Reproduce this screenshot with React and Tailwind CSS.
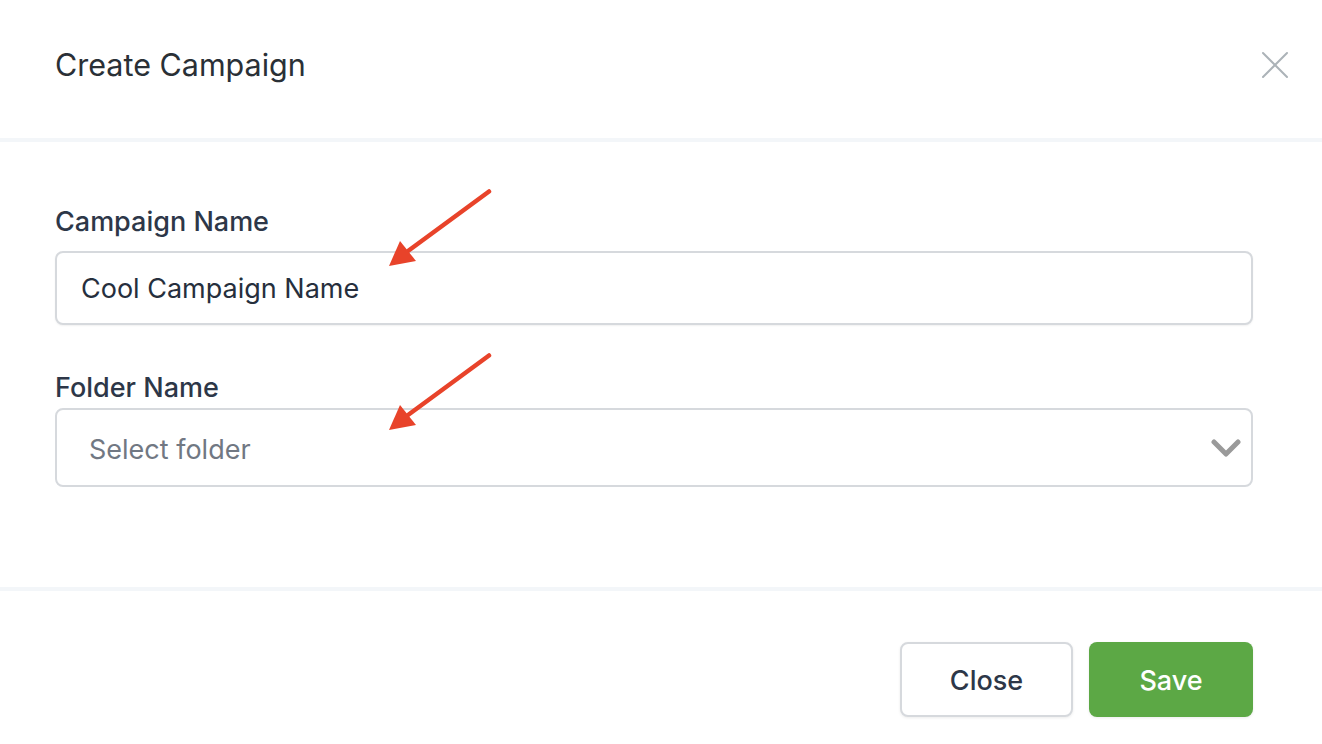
import React from "react";

function Arrow({ className }) {
  return (
    <svg
      className={className}
      width="104"
      height="80"
      viewBox="0 0 104 80"
      fill="none"
    >
      <line x1="101" y1="2.5" x2="20" y2="62" stroke="#e8432a" strokeWidth="4.5" strokeLinecap="round" />
      <polygon points="1,77 12,52 28,72" fill="#e8432a" />
    </svg>
  );
}

export default function App() {
  return (
    <div
      className="relative h-[744px] w-[1322px] overflow-hidden bg-white"
      style={{ fontFamily: "Inter, 'Noto Sans', sans-serif" }}
    >
      <header className="flex h-[138px] items-start justify-between pl-[55px] pr-[33px] pt-[46px]">
        <h2 className="text-[30.5px] font-normal leading-[38px] text-[#2a3036]">
          Create Campaign
        </h2>
        <button className="mt-[5px] text-[#acb3b8]">
          <svg width="28" height="28" viewBox="0 0 28 28" fill="none">
            <path d="M2 2 L26 26 M26 2 L2 26" stroke="currentColor" strokeWidth="2" strokeLinecap="round" />
          </svg>
        </button>
      </header>
      <div className="h-[4px] bg-[#f3f6f9]" />

      <main className="h-[445px] pl-[55px] pr-[69px] pt-[64px]">
        <label className="block text-[27px] font-medium leading-[32px] text-[#2d3748]">
          Campaign Name
        </label>
        <div className="mt-[13px] flex h-[74px] items-center rounded-[8px] border-2 border-[#d6d9dd] bg-white px-[24px] shadow-[0_1px_2px_rgba(0,0,0,0.06)]">
          <span className="mt-[1px] text-[27px] leading-[32px] text-[#262f3d]">Cool Campaign Name</span>
        </div>

        <label className="mt-[47px] block text-[27px] font-medium leading-[32px] text-[#2d3748]">
          Folder Name
        </label>
        <div className="mt-[4px] flex h-[79px] items-center justify-between rounded-[8px] border-2 border-[#d6d9dd] bg-white pl-[32px] pr-[10px]">
          <span className="mt-[5px] text-[27px] leading-[32px] text-[#717883]">Select folder</span>
          <svg width="30" height="20" viewBox="0 0 30 20" fill="none">
            <path d="M3 4 L15 16 L27 4" stroke="#9a9a9a" strokeWidth="5" strokeLinecap="round" strokeLinejoin="round" />
          </svg>
        </div>
      </main>

      <div className="h-[4px] bg-[#f3f6f9]" />
      <footer className="flex justify-end gap-[16px] pr-[69px] pt-[51px]">
        <button className="h-[75px] w-[173px] rounded-[8px] border-2 border-[#d6d9dd] bg-white pt-[4px] text-[27px] font-medium text-[#2d3748] shadow-[0_1px_3px_rgba(0,0,0,0.08)]">
          Close
        </button>
        <button className="h-[75px] w-[164px] rounded-[8px] bg-[#5ca845] pt-[4px] text-[27px] font-medium text-white shadow-[0_1px_3px_rgba(0,0,0,0.08)]">
          Save
        </button>
      </footer>

      <Arrow className="absolute left-[388px] top-[189px]" />
      <Arrow className="absolute left-[388px] top-[353px]" />
    </div>
  );
}
